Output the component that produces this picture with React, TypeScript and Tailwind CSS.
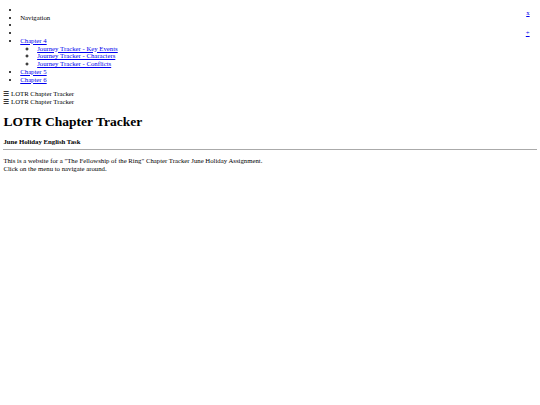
export default function App() {
  const link = "text-[#0000ee] underline";
  return (
    <div className="m-[3.375px] font-['Liberation_Serif','Times_New_Roman',serif] text-[6.75px] leading-[1.15] text-black bg-white">
      <ul className="mt-[5.75px] mb-[6.75px] pl-[16.875px] list-disc">
        <li>
          <a href="#" className={`${link} float-right mr-[7px] mt-[3px]`}>
            x
          </a>
          &nbsp;
        </li>
        <li>Navigation</li>
        <li>&nbsp;</li>
        <li>
          <a href="#" className={`${link} float-right mr-[7px]`}>
            +
          </a>
          &nbsp;
        </li>
        <li>
          <a href="#" className={link}>
            Chapter 4
          </a>
          <ul className="pl-[16.875px] list-[circle]">
            <li>
              <a href="#" className={link}>
                Journey Tracker - Key Events
              </a>
            </li>
            <li>
              <a href="#" className={link}>
                Journey Tracker - Characters
              </a>
            </li>
            <li>
              <a href="#" className={link}>
                Journey Tracker - Conflicts
              </a>
            </li>
          </ul>
        </li>
        <li>
          <a href="#" className={link}>
            Chapter 5
          </a>
        </li>
        <li>
          <a href="#" className={link}>
            Chapter 6
          </a>
        </li>
      </ul>

      <div>☰ LOTR Chapter Tracker</div>
      <div>☰ LOTR Chapter Tracker</div>

      <h1 className="text-[13.5px] font-bold mt-[8px] mb-[9px]">LOTR Chapter Tracker</h1>
      <h4 className="font-bold mt-[9px] mb-0">June Holiday English Task</h4>
      <hr className="my-[3.375px] border-t border-[#aaaaaa]" />

      <p className="my-[6.75px]">
        This is a website for a "The Fellowship of the Ring" Chapter Tracker June Holiday Assignment.
        <br />
        Click on the menu to navigate around.
      </p>
    </div>
  );
}
